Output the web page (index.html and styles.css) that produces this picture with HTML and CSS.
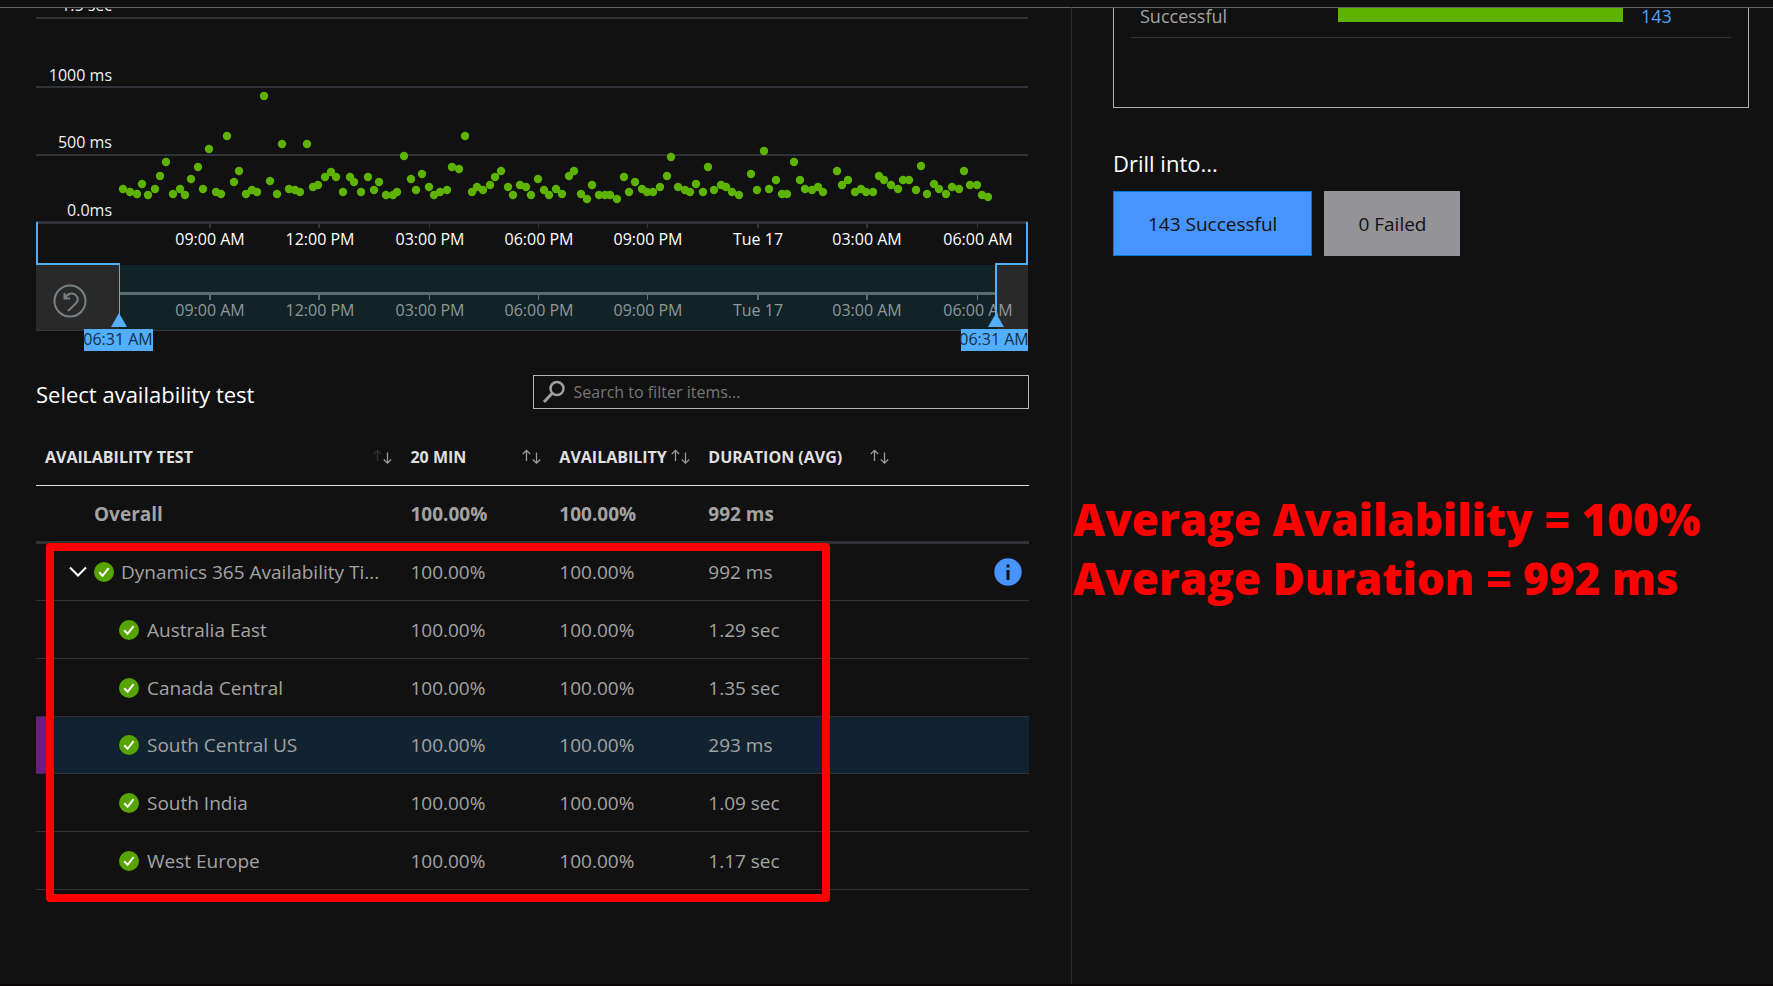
FILE: index.html
```html
<!DOCTYPE html>
<html lang="en">
<head>
<meta charset="utf-8">
<title>Availability</title>
<link rel="stylesheet" href="styles.css">
</head>
<body>
<svg class="defs" aria-hidden="true">
  <symbol id="check" viewBox="0 0 20 20">
    <circle cx="10" cy="10" r="10" fill="#57a300"/>
    <path d="M5.2 10.3l3.4 3.5 6-7.6" fill="none" stroke="#fff" stroke-width="2"/>
  </symbol>
  <symbol id="sort" viewBox="0 0 19 16">
    <path class="up" d="M4.500 12V1.500M.8 5l3.700-3.700L8.200 5"/>
    <path d="M14.500 3.500V14M10.800 10.500l3.700 3.700 3.700-3.700"/>
  </symbol>
</svg>
<div class="page">
  <main class="pane main-pane">
    <section class="chart">
      <svg class="plot" viewBox="36 8 993 344">
        <g fill="#2f3338">
          <path d="M36 17h992v2H36zM36 86h992v2H36zM36 154h992v2H36zM36 221h992v3H36z"/>
          <path d="M209 224h2v4h-2zM318 224h2v4h-2zM429 224h1v4h-1zM538 224h1v4h-1zM647 224h1v4h-1zM757 224h2v4h-2zM866 224h2v4h-2zM977 224h1v4h-1z"/>
        </g>
        <g class="axis-y">
          <text x="112" y="11">1.5 sec</text>
          <text x="112" y="81">1000 ms</text>
          <text x="112" y="148">500 ms</text>
          <text x="112" y="216">0.0ms</text>
        </g>
        <path class="dots" d="M123 189h0M130 192h0M137 194h0M142 184h0M148 195h0M155 189h0M160 176h0M166 162h0M173 194h0M180 189h0M185 195h0M191 179h0M198 167h0M203 189h0M209 149h0M216 192h0M221 194h0M227 136h0M234 182h0M239 171h0M246 194h0M252 190h0M257 192h0M264 96h0M270 181h0M277 194h0M282 144h0M289 189h0M295 190h0M300 192h0M307 144h0M313 187h0M318 185h0M325 177h0M331 172h0M336 177h0M343 192h0M350 177h0M354 182h0M361 192h0M368 177h0M374 190h0M379 182h0M386 195h0M393 195h0M397 192h0M404 156h0M411 179h0M416 190h0M422 174h0M429 187h0M434 195h0M440 192h0M447 190h0M452 167h0M459 169h0M465 136h0M472 192h0M477 187h0M483 190h0M490 185h0M495 177h0M501 171h0M508 187h0M513 195h0M520 185h0M526 187h0M531 195h0M538 179h0M544 190h0M549 195h0M556 189h0M562 194h0M569 176h0M574 171h0M581 194h0M587 199h0M592 185h0M599 195h0M605 195h0M610 195h0M617 199h0M624 177h0M629 192h0M635 182h0M642 189h0M647 192h0M653 192h0M660 187h0M667 176h0M671 157h0M678 187h0M685 190h0M690 192h0M696 184h0M703 192h0M708 167h0M714 190h0M721 185h0M726 187h0M732 192h0M739 195h0M751 174h0M757 190h0M764 151h0M769 189h0M776 180h0M782 194h0M787 194h0M794 162h0M800 180h0M805 189h0M812 190h0M818 187h0M823 192h0M837 171h0M842 185h0M848 180h0M855 192h0M861 189h0M866 192h0M873 192h0M879 176h0M884 180h0M891 185h0M898 189h0M903 180h0M909 180h0M916 190h0M921 166h0M927 194h0M934 184h0M939 189h0M946 194h0M952 187h0M959 189h0M964 171h0M970 185h0M977 185h0M982 195h0M988 197h0"/>
        <g class="axis-x">
          <text x="210" y="245">09:00 AM</text>
          <text x="320" y="245">12:00 PM</text>
          <text x="430" y="245">03:00 PM</text>
          <text x="539" y="245">06:00 PM</text>
          <text x="648" y="245">09:00 PM</text>
          <text x="758" y="245">Tue 17</text>
          <text x="867" y="245">03:00 AM</text>
          <text x="978" y="245">06:00 AM</text>
        </g>
        <path fill="#292929" d="M36 265h83v65H36zM997 265h31v65h-31z"/>
        <path fill="#122328" d="M119 265h877v65H119z"/>
        <path fill="#33363a" d="M36 330h992v1H36z"/>
        <path fill="#596e72" d="M120 292h876v3H120zM209 295h2v5h-2zM318 295h2v5h-2zM429 295h1v5h-1zM538 295h1v5h-1zM647 295h1v5h-1zM757 295h2v5h-2zM866 295h2v5h-2zM977 295h1v5h-1z"/>
        <g class="axis-x muted">
          <text x="210" y="316">09:00 AM</text>
          <text x="320" y="316">12:00 PM</text>
          <text x="430" y="316">03:00 PM</text>
          <text x="539" y="316">06:00 PM</text>
          <text x="648" y="316">09:00 PM</text>
          <text x="758" y="316">Tue 17</text>
          <text x="867" y="316">03:00 AM</text>
          <text x="978" y="316">06:00 AM</text>
        </g>
        <g fill="#54aefe">
          <path d="M36 222h2v41h82v57h-1v-55H36zM1028 222h-2v41h-31v57h2v-55h31z"/>
          <path d="M119 313l8 14h-16zM996 313l8 14h-16z"/>
          <path d="M84 329h69v22H84zM961 329h67v22h-67z"/>
        </g>
        <g class="handle">
          <text x="118" y="345">06:31 AM</text>
          <text x="994" y="345">06:31 AM</text>
        </g>
      </svg>
      <button class="undo" type="button" aria-label="Undo">
        <svg viewBox="0 0 34 34" fill="none" stroke="#798084" stroke-width="2">
          <circle cx="17" cy="17" r="15.500"/>
          <path d="M11.500 9v5.500H17M12 14c2.500-5 8-5.600 11-2.600 2.300 2.400 2.200 5.600-.3 8.200L15 27"/>
        </svg>
      </button>
    </section>

    <div class="toolbar">
      <h2>Select availability test</h2>
      <label class="search">
        <svg viewBox="0 0 24 24" fill="none" stroke="#a0a0a0" aria-hidden="true">
          <circle cx="15" cy="8.500" r="6.500" stroke-width="2.500"/>
          <path d="M10.500 13L2 22" stroke-width="3"/>
        </svg>
        <input type="text" placeholder="Search to filter items..." aria-label="Search to filter items">
      </label>
    </div>

    <div class="grid-wrap">
      <table class="tests">
        <colgroup><col class="c-name"><col class="c-num"><col class="c-num"><col class="c-dur"><col></colgroup>
        <thead>
          <tr>
            <th><div class="head"><span>AVAILABILITY TEST</span><svg class="sort" viewBox="0 0 19 16"><path class="dim" d="M4.500 12V1.500M.8 5l3.700-3.700L8.200 5"/><path d="M14.500 3.500V14M10.800 10.500l3.700 3.700 3.700-3.700"/></svg></div></th>
            <th><div class="head"><span>20 MIN</span><svg class="sort"><use href="#sort"/></svg></div></th>
            <th><div class="head"><span>AVAILABILITY</span><svg class="sort"><use href="#sort"/></svg></div></th>
            <th><div class="head"><span>DURATION (AVG)</span><svg class="sort"><use href="#sort"/></svg></div></th>
            <th></th>
          </tr>
        </thead>
        <tbody>
          <tr class="overall"><td>Overall</td><td>100.00%</td><td>100.00%</td><td>992 ms</td><td></td></tr>
          <tr class="group">
            <td><div class="name parent">
              <button class="toggle" type="button" aria-label="Collapse"><svg viewBox="0 0 18 12" fill="none" stroke="#fff" stroke-width="2"><path d="M1 1.500l8 8 8-8"/></svg></button>
              <svg class="check"><use href="#check"/></svg><span>Dynamics 365 Availability Ti...</span></div></td>
            <td>100.00%</td><td>100.00%</td><td>992 ms</td>
            <td class="info-cell"><button class="info" type="button" aria-label="Details"><svg viewBox="0 0 28 28"><circle cx="14" cy="14" r="13.700" fill="#4894fe"/><path fill="#111" d="M12.500 6.500h3v3h-3zM12.500 12h3v10h-3z"/></svg></button></td>
          </tr>
          <tr><td><div class="name"><svg class="check"><use href="#check"/></svg><span>Australia East</span></div></td><td>100.00%</td><td>100.00%</td><td>1.29 sec</td><td></td></tr>
          <tr><td><div class="name"><svg class="check"><use href="#check"/></svg><span>Canada Central</span></div></td><td>100.00%</td><td>100.00%</td><td>1.35 sec</td><td></td></tr>
          <tr class="selected"><td><div class="name"><svg class="check"><use href="#check"/></svg><span>South Central US</span></div></td><td>100.00%</td><td>100.00%</td><td>293 ms</td><td></td></tr>
          <tr><td><div class="name"><svg class="check"><use href="#check"/></svg><span>South India</span></div></td><td>100.00%</td><td>100.00%</td><td>1.09 sec</td><td></td></tr>
          <tr><td><div class="name"><svg class="check"><use href="#check"/></svg><span>West Europe</span></div></td><td>100.00%</td><td>100.00%</td><td>1.17 sec</td><td></td></tr>
        </tbody>
      </table>
      <div class="highlight"></div>
    </div>
  </main>

  <aside class="pane side-pane">
    <section class="summary">
      <div class="summary-row">
        <span>Successful</span><span class="bar"></span><a href="#">143</a>
      </div>
    </section>
    <h2>Drill into...</h2>
    <div class="actions">
      <button class="btn primary" type="button">143 Successful</button>
      <button class="btn" type="button">0 Failed</button>
    </div>
    <p class="note">Average Availability = 100%<br>Average Duration = 992 ms</p>
  </aside>
</div>
</body>
</html>
```
FILE: styles.css
```css
* { box-sizing: border-box; }

body {
  margin: 0;
  background: #111;
  color: #a3a3a3;
  font: 19px/24px "Open Sans", "Noto Sans", sans-serif;
  overflow: hidden;
}

button {
  padding: 0;
  border: 0;
  background: none;
  color: inherit;
  font: inherit;
  cursor: pointer;
}

button svg { display: block; }

h2 {
  margin: 0;
  color: #fff;
  font-size: 22px;
  font-weight: 400;
  line-height: 28px;
}

.defs { position: absolute; width: 0; height: 0; }

.page {
  display: grid;
  grid-template-columns: 1072fr 701fr;
  min-height: 100vh;
  padding-top: 7px;
  border-bottom: 2px solid #080405;
}

.pane { border-top: 1px solid #666; }

.main-pane {
  padding: 0 42px 0 36px;
  border-right: 1px solid #2b2b2b;
}

/* Chart */
.chart { position: relative; }
.plot { display: block; width: 100%; overflow: hidden; font-size: 16px; }
.axis-y { fill: #f0f0f0; text-anchor: end; }
.axis-x { fill: #fff; text-anchor: middle; }
.axis-x.muted { fill: #8f989b; }
.handle { fill: #12304a; text-anchor: middle; }
.dots { fill: none; stroke: #5db300; stroke-width: 8.400; stroke-linecap: round; }

.undo {
  position: absolute;
  left: 17px;
  bottom: 34px;
  width: 34px;
  height: 34px;
}

/* Toolbar */
.toolbar {
  display: flex;
  justify-content: space-between;
  align-items: flex-start;
  padding-top: 23px;
}

.toolbar h2 { padding-top: 5px; }

.search {
  display: flex;
  align-items: center;
  gap: 8px;
  width: 50%;
  height: 34px;
  padding: 0 8px;
  border: 1px solid #b5b5b5;
}

.search svg { width: 24px; height: 24px; }

.search input {
  flex: 1;
  min-width: 0;
  padding: 0;
  border: 0;
  outline: 0;
  background: none;
  color: #fff;
  font: inherit;
  font-size: 16px;
}

.search input::placeholder { color: #767676; opacity: 1; }

/* Table */
.grid-wrap { position: relative; padding-top: 19px; }

.tests {
  width: 100%;
  border-spacing: 0;
  table-layout: fixed;
}

.c-name { width: 36.800%; }
.c-num { width: 15%; }
.c-dur { width: 20%; }

.tests th, .tests td {
  height: 58px;
  padding: 0 9px;
  border-bottom: 1px solid #2f3338;
  text-align: left;
  white-space: nowrap;
}

.tests th {
  border-bottom-color: #ddd;
  color: #e0e0e0;
  font-size: 16px;
  font-weight: 700;
}

.head { display: flex; justify-content: space-between; align-items: center; }

.sort {
  flex: none;
  width: 19px;
  height: 16px;
  fill: none;
  stroke: #9a9a9a;
  stroke-width: 1.300;
}

.sort .dim { stroke: #333; }

.tests .overall td {
  border-bottom: 3px solid #2f3338;
  font-weight: 700;
}

.tests .overall td:first-child { padding-left: 58px; }

.tests .group td { height: 57px; }
.tests .selected td { height: 57px; background: #112330; }
.tests .selected td:first-child { box-shadow: inset 12px 0 #68217a; }

.name { display: flex; align-items: center; gap: 8px; padding-left: 74px; }
.name.parent { padding-left: 24px; gap: 7px; }
.toggle svg { width: 18px; height: 12px; }
.check { flex: none; width: 20px; height: 20px; }

.tests .info-cell { padding-right: 7px; }
.info { display: block; margin-left: auto; }
.info svg { width: 28px; height: 28px; }

.highlight {
  position: absolute;
  top: 134px;
  bottom: -12px;
  left: 10px;
  width: 79%;
  border: 8px solid #f00;
  border-radius: 4px;
  pointer-events: none;
}

/* Side pane */
.side-pane { padding: 0 24px 0 41px; }

.summary {
  height: 100px;
  padding: 0 17px;
  border: 1px solid #b0b0b0;
  border-top: 0;
}

.summary-row {
  display: grid;
  grid-template-columns: 198px 285px 1fr;
  align-items: start;
  height: 30px;
  padding-left: 9px;
  border-bottom: 1px solid #333;
  font-size: 18px;
  line-height: 16px;
}

.bar { height: 14px; background: #5db300; }
.summary-row a { padding-left: 18px; color: #4ea1f5; text-decoration: none; }

.side-pane h2 { margin-top: 41px; }

.actions { display: flex; gap: 12px; margin-top: 14px; }

.btn {
  height: 65px;
  padding: 0 34px;
  background: #949398;
  color: #111;
}

.btn.primary { border: 1px solid #0078d4; background: #4894fe; }

.note {
  margin: 234px 0 0 -40px;
  color: #f00;
  font-size: 44px;
  font-weight: 800;
  line-height: 59px;
  white-space: nowrap;
}
```
